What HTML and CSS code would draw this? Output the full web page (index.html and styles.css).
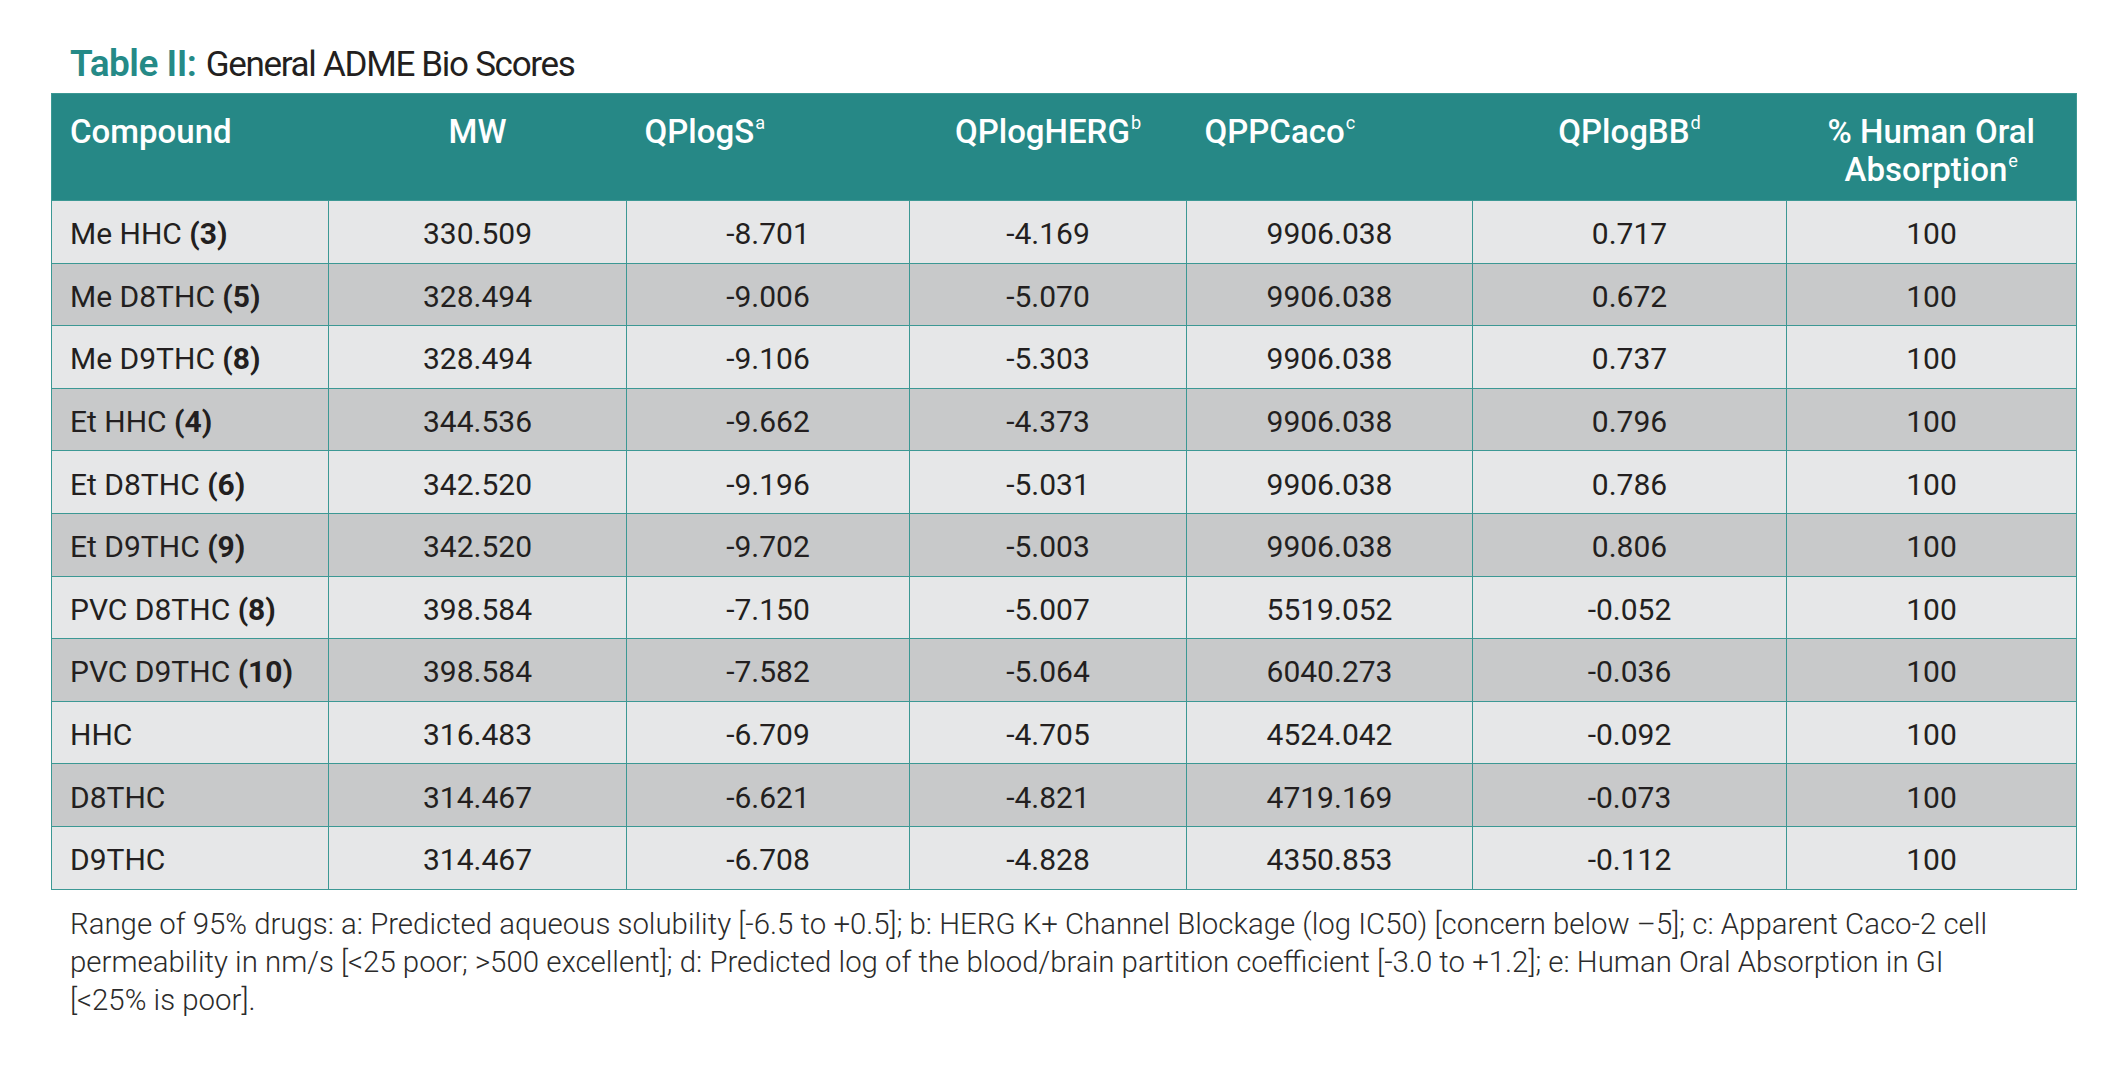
FILE: index.html
```html
<!DOCTYPE html>
<html>
<head>
<meta charset="utf-8">
<link rel="stylesheet" href="styles.css">
</head>
<body>
<div class="page">
  <h1 class="title"><span class="label">Table II:</span> <span class="caption">General ADME Bio Scores</span></h1>
  <table class="adme">
    <colgroup>
      <col class="c1"><col class="c2"><col class="c3"><col class="c4"><col class="c5"><col class="c6"><col class="c7">
    </colgroup>
    <thead>
      <tr>
        <th class="left">Compound</th>
        <th>MW</th>
        <th class="left">QPlogS<sup>a</sup></th>
        <th>QPlogHERG<sup>b</sup></th>
        <th class="left">QPPCaco<sup>c</sup></th>
        <th>QPlogBB<sup>d</sup></th>
        <th>% Human Oral<br>Absorption<sup>e</sup></th>
      </tr>
    </thead>
    <tbody>
      <tr><td class="name">Me HHC <b>(3)</b></td><td>330.509</td><td>-8.701</td><td>-4.169</td><td>9906.038</td><td>0.717</td><td>100</td></tr>
      <tr><td class="name">Me D8THC <b>(5)</b></td><td>328.494</td><td>-9.006</td><td>-5.070</td><td>9906.038</td><td>0.672</td><td>100</td></tr>
      <tr><td class="name">Me D9THC <b>(8)</b></td><td>328.494</td><td>-9.106</td><td>-5.303</td><td>9906.038</td><td>0.737</td><td>100</td></tr>
      <tr><td class="name">Et HHC <b>(4)</b></td><td>344.536</td><td>-9.662</td><td>-4.373</td><td>9906.038</td><td>0.796</td><td>100</td></tr>
      <tr><td class="name">Et D8THC <b>(6)</b></td><td>342.520</td><td>-9.196</td><td>-5.031</td><td>9906.038</td><td>0.786</td><td>100</td></tr>
      <tr><td class="name">Et D9THC <b>(9)</b></td><td>342.520</td><td>-9.702</td><td>-5.003</td><td>9906.038</td><td>0.806</td><td>100</td></tr>
      <tr><td class="name">PVC D8THC <b>(8)</b></td><td>398.584</td><td>-7.150</td><td>-5.007</td><td>5519.052</td><td>-0.052</td><td>100</td></tr>
      <tr><td class="name">PVC D9THC <b>(10)</b></td><td>398.584</td><td>-7.582</td><td>-5.064</td><td>6040.273</td><td>-0.036</td><td>100</td></tr>
      <tr><td class="name">HHC</td><td>316.483</td><td>-6.709</td><td>-4.705</td><td>4524.042</td><td>-0.092</td><td>100</td></tr>
      <tr><td class="name">D8THC</td><td>314.467</td><td>-6.621</td><td>-4.821</td><td>4719.169</td><td>-0.073</td><td>100</td></tr>
      <tr><td class="name">D9THC</td><td>314.467</td><td>-6.708</td><td>-4.828</td><td>4350.853</td><td>-0.112</td><td>100</td></tr>
    </tbody>
  </table>
  <p class="note">Range of 95% drugs: a: Predicted aqueous solubility [-6.5 to +0.5]; b: HERG K+ Channel Blockage (log IC50) [concern below –5]; c: Apparent Caco-2 cell permeability in nm/s [&lt;25 poor; &gt;500 excellent]; d: Predicted log of the blood/brain partition coefficient [-3.0 to +1.2]; e: Human Oral Absorption in GI<br>[&lt;25% is poor].</p>
</div>
</body>
</html>
```

FILE: styles.css
```css
html, body {
  margin: 0;
  padding: 0;
  background: #ffffff;
}

.page {
  padding: 42px 0 0 51px;
  font-family: Roboto, "Liberation Sans", sans-serif;
  color: #231f20;
}

.title {
  margin: 0 0 6px 19px;
  font-family: Roboto, "Liberation Sans", sans-serif;
  font-size: 37px;
  font-weight: 400;
  line-height: 44px;
  color: #231f20;
}

.title .label {
  color: #258a87;
  font-weight: 600;
  letter-spacing: -0.5px;
}

.title .caption {
  font-size: 35px;
  font-weight: 400;
  letter-spacing: -1.3px;
}

.adme {
  border-collapse: collapse;
  width: 2025px;
  table-layout: fixed;
  border: 1px solid #3c9894;
}

.c1 { width: 277px; }
.c2 { width: 298px; }
.c3 { width: 283px; }
.c4 { width: 277px; }
.c5 { width: 286px; }
.c6 { width: 314px; }
.c7 { width: 290px; }

.adme thead th {
  background: #268886;
  color: #ffffff;
  font-weight: 500;
  font-size: 33px;
  line-height: 38px;
  height: 107px;
  box-sizing: border-box;
  padding: 19px 18px 0;
  vertical-align: top;
  text-align: center;
}

.adme thead th.left {
  text-align: left;
}

.adme sup {
  font-size: 0.55em;
  line-height: 0;
  vertical-align: 0.75em;
  margin-left: 1px;
  font-weight: 400;
}

.adme tbody td {
  border: 1px solid #3c9894;
  height: 62.6px;
  box-sizing: border-box;
  padding: 4px 18px 0;
  font-size: 30px;
  text-align: center;
  vertical-align: middle;
  background: #e6e7e8;
}

.adme tbody tr:nth-child(even) td {
  background: #c8c9ca;
}

.adme tbody td.name {
  text-align: left;
}

.adme tbody td b {
  font-weight: 700;
}

.note {
  width: 1990px;
  margin: 15px 0 0 19px;
  font-family: Roboto, "Liberation Sans", sans-serif;
  font-size: 29.4px;
  line-height: 38px;
  color: #2b2b2b;
  font-weight: 300;
}
```
